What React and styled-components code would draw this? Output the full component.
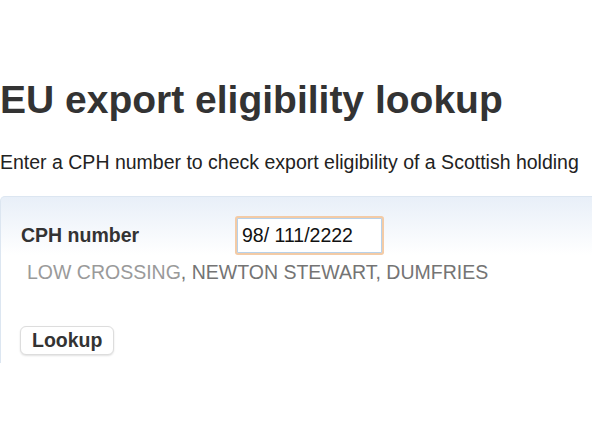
import React, { useState } from "react";
import styled, { createGlobalStyle } from "styled-components";

const GlobalStyle = createGlobalStyle`
  html, body {
    margin: 0;
    padding: 0;
    background: #ffffff;
    overflow: hidden;
  }
  body {
    font-family: "Liberation Sans", Arial, Helvetica, sans-serif;
    color: #333333;
  }
`;

const Page = styled.div`
  width: 592px;
  height: 444px;
  overflow: hidden;
`;

const Title = styled.h1`
  margin: 77px 0 0 0;
  font-size: 39px;
  line-height: 45px;
  font-weight: bold;
  color: #333333;
`;

const Intro = styled.p`
  margin: 28px 0 0 0;
  font-size: 19.5px;
  line-height: 24px;
  color: #222222;
`;

const Panel = styled.form`
  margin-top: 22px;
  width: 640px;
  padding: 21px 0 8px 20px;
  border: 1px solid #dce6f1;
  border-bottom: none;
  border-radius: 5px 0 0 0;
  background: linear-gradient(to bottom, #e8eff8 0px, #ffffff 58px);
  box-sizing: border-box;
`;

const Row = styled.div`
  display: flex;
  align-items: center;
  height: 35px;
`;

const Label = styled.label`
  width: 216px;
  font-size: 19.5px;
  line-height: 35px;
  font-weight: bold;
  color: #333333;
`;

const CphInput = styled.input`
  width: 145px;
  height: 35px;
  box-sizing: border-box;
  padding: 0 4px;
  border: 1px solid #b7d1ea;
  border-radius: 1px;
  box-shadow: 0 0 0 2px #f3cba6;
  font-family: "Liberation Sans", Arial, Helvetica, sans-serif;
  font-size: 19.5px;
  color: #111111;
  background: #ffffff;
  outline: none;
`;

const Address = styled.div`
  margin: 7px 0 0 6px;
  font-size: 19.5px;
  line-height: 24px;
  color: #747474;
`;

const Locality = styled.span`
  color: ${(p) => (p.$faded ? "#9a9a9a" : "#747474")};
`;

const Button = styled.button`
  display: block;
  margin: 42px 0 0 -1px;
  height: 29px;
  padding: 0 11px;
  border: 1px solid #dddddd;
  border-radius: 6px;
  background: #ffffff;
  box-shadow: 0 1px 2px rgba(0, 0, 0, 0.12);
  font-family: "Liberation Sans", Arial, Helvetica, sans-serif;
  font-size: 19.5px;
  font-weight: bold;
  line-height: 27px;
  color: #333333;
`;

const App = () => {
  const [cph, setCph] = useState("98/ 111/2222");

  return (
    <Page>
      <GlobalStyle />
      <Title>EU export eligibility lookup</Title>
      <Intro>Enter a CPH number to check export eligibility of a Scottish holding</Intro>
      <Panel onSubmit={(e) => e.preventDefault()}>
        <Row>
          <Label htmlFor="cph">CPH number</Label>
          <CphInput
            id="cph"
            type="text"
            value={cph}
            onChange={(e) => setCph(e.target.value)}
            autoFocus
          />
        </Row>
        <Address>
          <Locality $faded>LOW CROSSING</Locality>
          <Locality>, NEWTON STEWART, DUMFRIES</Locality>
        </Address>
        <Button type="submit">Lookup</Button>
      </Panel>
    </Page>
  );
};

export default App;
